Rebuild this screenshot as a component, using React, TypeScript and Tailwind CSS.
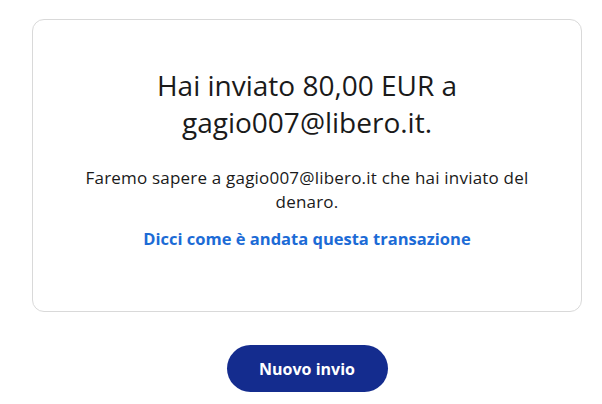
export default function App() {
  return (
    <div className="min-h-[404px] w-[602px] bg-white" style={{ fontFamily: "'Open Sans', Lato, sans-serif" }}>
      <div className="pt-[19px] px-[32px] w-[614px]">
        <div className="w-[550px] h-[293px] rounded-[12px] border border-[#d9d9d9] flex flex-col items-center px-[30px] pt-[47px]">
          <h1 className="text-center text-[28px] leading-[37px] text-[#1a1a1a] font-normal">
            Hai inviato 80,00 EUR a<br />gagio007@libero.it.
          </h1>
          <p className="mt-[25px] text-center text-[17px] leading-[24px] tracking-[0.2px] text-[#1a1a1a]">
            Faremo sapere a gagio007@libero.it che hai inviato del<br />denaro.
          </p>
          <a className="mt-[13px] text-center text-[16.5px] leading-[24px] font-bold text-[#1c6bd6]">
            Dicci come è andata questa transazione
          </a>
        </div>
        <div className="w-[550px] flex justify-center mt-[33px]">
          <button className="w-[161px] h-[47px] rounded-full bg-[#142c8e] text-white text-[16px] font-bold">
            Nuovo invio
          </button>
        </div>
      </div>
    </div>
  );
}
